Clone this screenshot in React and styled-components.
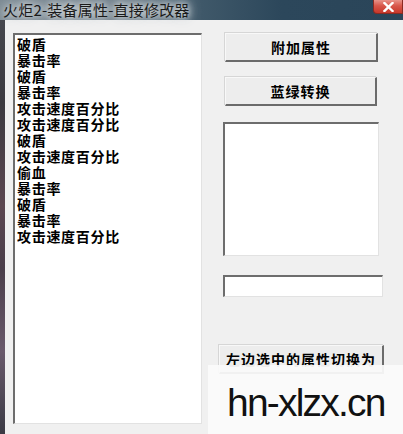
import * as React from 'react';
import styled, { createGlobalStyle } from 'styled-components';

const GlobalStyle = createGlobalStyle`
  html, body {
    margin: 0;
    padding: 0;
    background: #f0f0f0;
  }
  body {
    font-family: "Noto Sans CJK SC", "Liberation Sans", sans-serif;
  }
`;

const attributes = [
  '破盾',
  '暴击率',
  '破盾',
  '暴击率',
  '攻击速度百分比',
  '攻击速度百分比',
  '破盾',
  '攻击速度百分比',
  '偷血',
  '暴击率',
  '破盾',
  '暴击率',
  '攻击速度百分比',
];

export default function App() {
  return (
    <>
      <GlobalStyle />
      <Window>
        <TitleBar>
          <TitleText>火炬2-装备属性-直接修改器</TitleText>
          <CloseButton>
            <svg width="11" height="10" viewBox="0 0 11 10">
              <path
                d="M1.5 1 L9.5 9 M9.5 1 L1.5 9"
                stroke="#fff"
                strokeWidth="2.4"
                strokeLinecap="square"
              />
            </svg>
          </CloseButton>
        </TitleBar>
        <Body>
          <FrameEdge />
          <Content>
            <ListBox>
              {attributes.map((item, i) => (
                <ListItem key={i}>{item}</ListItem>
              ))}
            </ListBox>
            <SideColumn>
              <PushButton $offset={6} $width={153} $gap={0}>
                附加属性
              </PushButton>
              <PushButton $offset={6} $width={152} $gap={15}>
                蓝绿转换
              </PushButton>
              <Field $offset={4} $width={156} $height={134} $gap={16} />
              <Field $offset={4} $width={160} $height={22} $gap={19} />
              <PushButton $offset={0} $width={165} $gap={48}>
                左边选中的属性切换为
              </PushButton>
            </SideColumn>
          </Content>
        </Body>
        <Watermark>hn-xlzx.cn</Watermark>
      </Window>
    </>
  );
}

const Window = styled.div`
  position: relative;
  width: 403px;
  height: 434px;
  overflow: hidden;
  display: flex;
  flex-direction: column;
  background: #f0f0f0;
`;

const TitleBar = styled.div`
  height: 20px;
  flex: 0 0 20px;
  display: flex;
  align-items: flex-start;
  justify-content: space-between;
  background: linear-gradient(
    to right,
    #7d8b94 0%,
    #6f7f8a 30%,
    #3f5869 50%,
    #2c475b 70%,
    #2a4559 100%
  );
`;

const TitleText = styled.span`
  padding-left: 3px;
  font-size: 15px;
  line-height: 20px;
  letter-spacing: 0.2px;
  color: #1a1a1a;
  white-space: nowrap;
  text-shadow: 0 0 6px #e4e8ea, 0 0 10px #d8dde0, 0 0 14px #cfd5d8;
`;

const CloseButton = styled.div`
  width: 30px;
  height: 14px;
  display: flex;
  align-items: center;
  justify-content: center;
  background: linear-gradient(to bottom, #e8938a 0%, #d8564a 45%, #c7382b 100%);
  border: 1px solid #8a2a22;
  border-top: none;
  border-radius: 0 0 0 4px;
  box-sizing: border-box;
`;

const Body = styled.div`
  flex: 1;
  display: flex;
`;

const FrameEdge = styled.div`
  width: 5px;
  background: linear-gradient(
    to bottom,
    #46474d 0%,
    #3b3a40 20%,
    #5b4650 45%,
    #4a3e4a 60%,
    #6a5a6c 80%,
    #3a3a44 100%
  );
`;

const Content = styled.div`
  flex: 1;
  display: flex;
  padding: 13px 0 0 8px;
`;

const sunken = `
  box-sizing: border-box;
  background: #fff;
  border-style: solid;
  border-width: 2px 1px 1px 2px;
  border-color: #6d6d6d #e2e2e2 #e2e2e2 #6d6d6d;
`;

const ListBox = styled.div`
  ${sunken}
  width: 189px;
  height: 391px;
  padding: 1px 0 0 2px;
`;

const ListItem = styled.div`
  font-size: 14px;
  font-weight: 700;
  line-height: 16px;
  letter-spacing: 0.7px;
  color: #000;
  white-space: nowrap;
`;

const SideColumn = styled.div`
  display: flex;
  flex-direction: column;
  align-items: flex-start;
  padding-left: 17px;
`;

const PushButton = styled.div`
  box-sizing: border-box;
  width: ${(p) => p.$width}px;
  height: 29px;
  margin: ${(p) => p.$gap}px 0 0 ${(p) => p.$offset}px;
  display: flex;
  align-items: center;
  justify-content: center;
  background: #ededed;
  border-style: solid;
  border-width: 1px 2px 2px 1px;
  border-color: #f8f8f8 #6b6b6b #6b6b6b #f8f8f8;
  box-shadow: -1px -1px 0 #d6d6d6;
  font-size: 14px;
  font-weight: 700;
  letter-spacing: 1px;
  color: #000;
  white-space: nowrap;
`;

const Field = styled.div`
  ${sunken}
  width: ${(p) => p.$width}px;
  height: ${(p) => p.$height}px;
  margin: ${(p) => p.$gap}px 0 0 ${(p) => p.$offset}px;
`;

const Watermark = styled.div`
  position: absolute;
  left: 208px;
  top: 365px;
  right: 0;
  bottom: 0;
  padding: 18px 0 0 19px;
  background: rgba(250, 250, 250, 0.94);
  font-family: "Liberation Sans", Arial, sans-serif;
  font-size: 39px;
  line-height: 1;
  letter-spacing: -1.8px;
  color: #111;
`;
